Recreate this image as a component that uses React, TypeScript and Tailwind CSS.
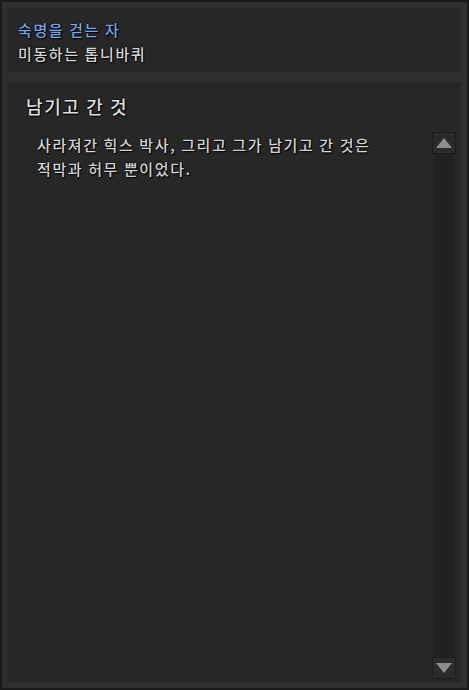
import React from 'react';

const shadow = '[text-shadow:0_0_2px_#000,1px_1px_1px_#000]';

const ArrowButton: React.FC<{ dir: 'up' | 'down' }> = ({ dir }) => (
  <div className="w-[24px] h-[22px] bg-[#2b2b2b] border border-[#1c1c1c] flex items-center justify-center">
    <svg width="16" height="10" viewBox="0 0 16 10">
      {dir === 'up' ? (
        <polygon points="8,0 16,10 0,10" fill="#8e8e92" />
      ) : (
        <polygon points="0,0 16,0 8,10" fill="#8e8e92" />
      )}
    </svg>
  </div>
);

export default function App() {
  return (
    <div className="w-[469px] h-[690px] bg-[#1a1a1a] p-[2px] font-['Noto_Sans_CJK_KR','Noto_Sans',sans-serif] font-medium tracking-[1.6px]">
      <div className="w-full h-full bg-[#2f2f2f] p-[6px] flex flex-col gap-[10px]">
        {/* Header */}
        <div className="bg-[#272727] h-[64px] px-[10px] pt-[10px] flex flex-col">
          <div className={`text-[15px] leading-[24px] text-[#78a6ec] ${shadow}`}>숙명을 걷는 자</div>
          <div className={`text-[15px] leading-[24px] text-[#d6d6d6] ${shadow}`}>미동하는 톱니바퀴</div>
        </div>

        {/* Body */}
        <div className="bg-[#272727] flex-1 flex flex-col pl-[18px] pt-[11px]">
          <div className={`text-[18px] leading-[27px] text-[#dedede] ${shadow}`}>남기고 간 것</div>
          <div className="flex-1 flex mt-[12px] pb-[3px]">
            <div className={`flex-1 pl-[11px] pt-[1px] text-[15px] leading-[24px] text-[#d4d4d4] ${shadow}`}>
              사라져간 힉스 박사, 그리고 그가 남기고 간 것은
              <br />
              적막과 허무 뿐이었다.
            </div>
            <div className="w-[24px] mr-[5px] flex flex-col tracking-normal">
              <ArrowButton dir="up" />
              <div className="flex-1 mx-[2px] bg-[#212121]" />
              <ArrowButton dir="down" />
            </div>
          </div>
        </div>
      </div>
    </div>
  );
}
